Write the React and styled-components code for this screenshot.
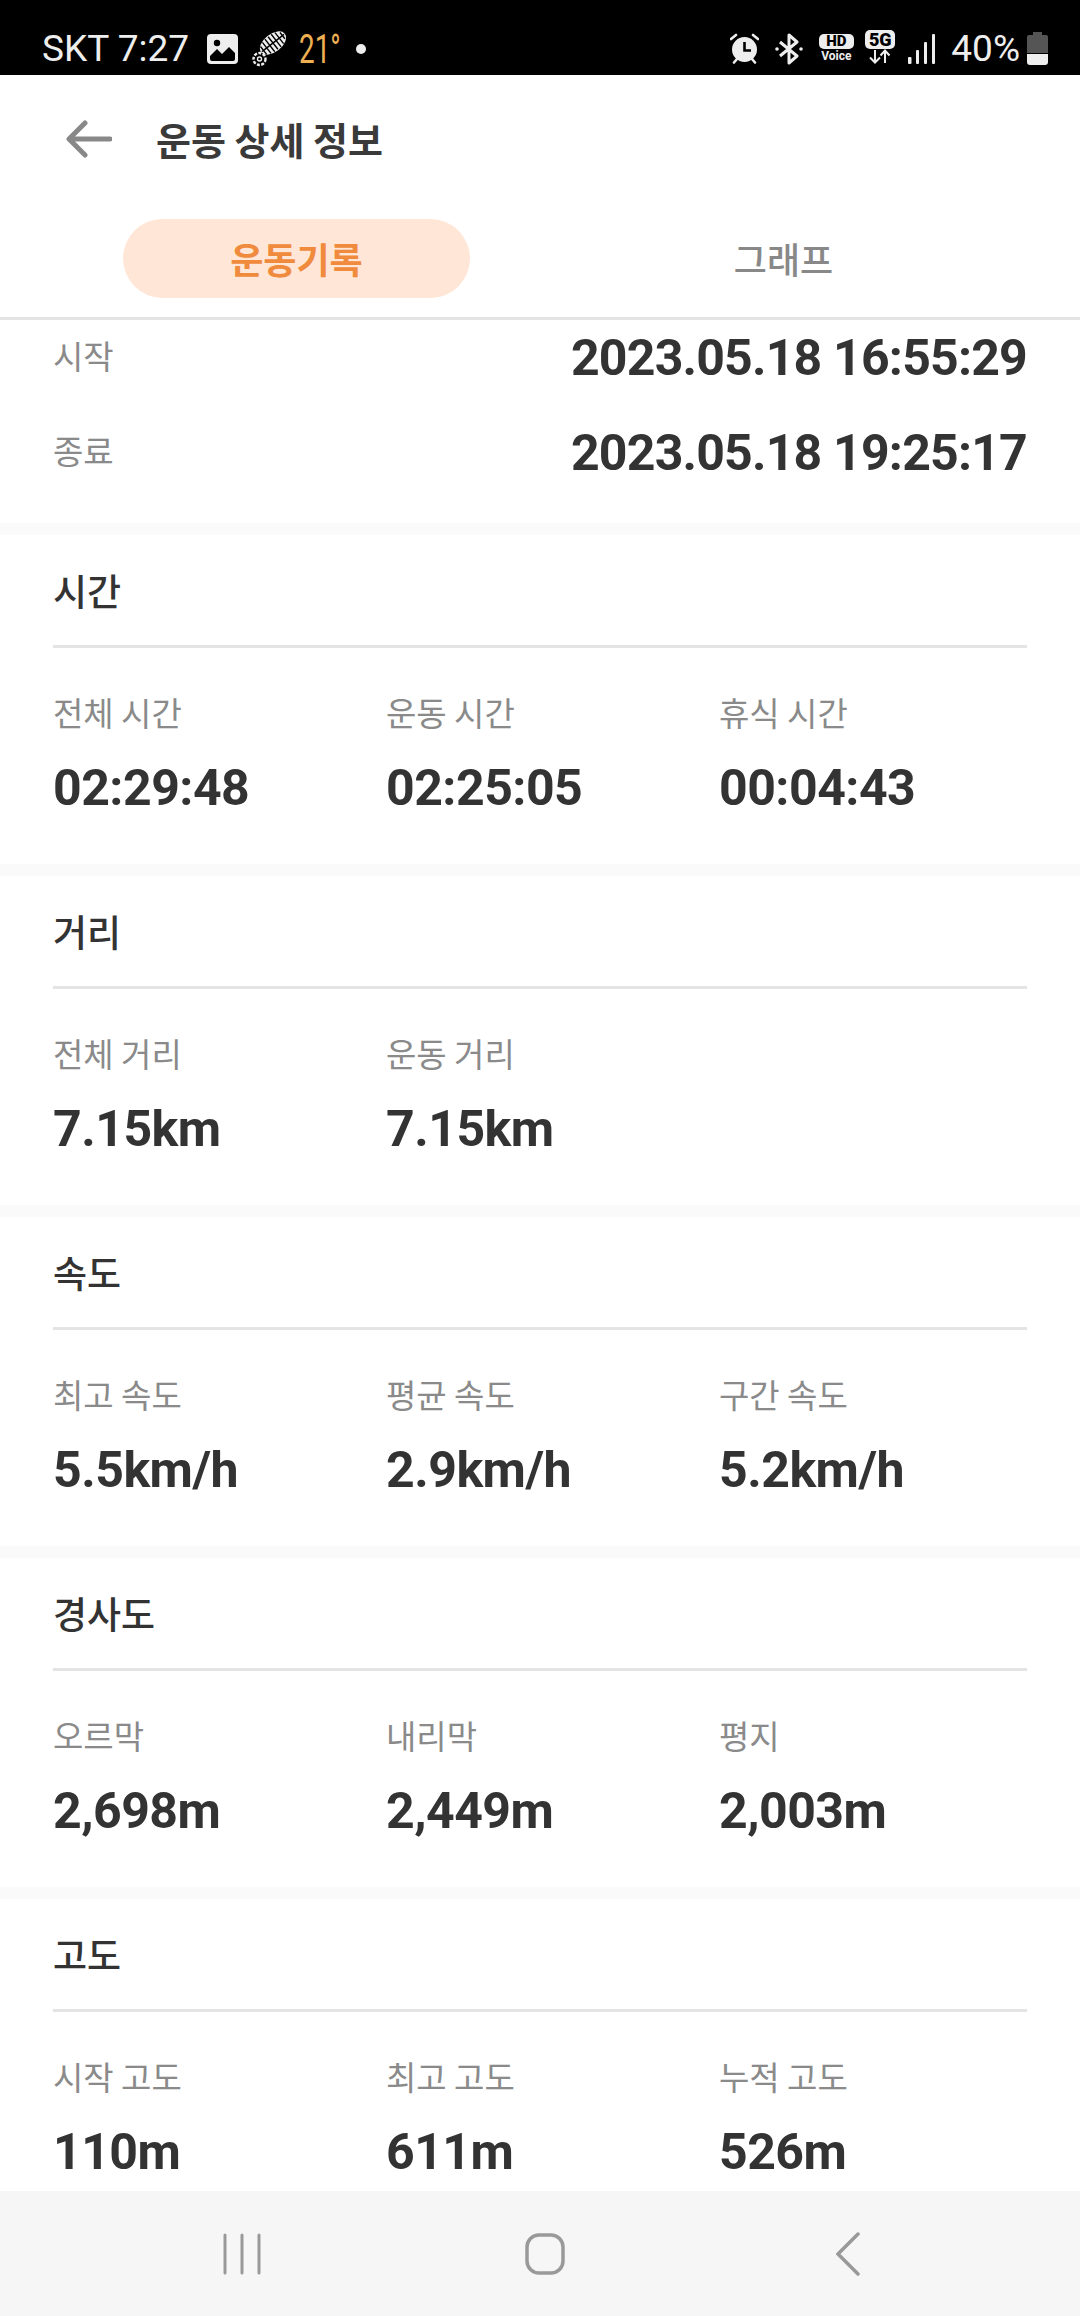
import React from 'react'
import styled, { createGlobalStyle } from 'styled-components'

const GlobalStyle = createGlobalStyle`
  html, body {
    margin: 0;
    padding: 0;
    background: #fafafa;
  }
  * {
    box-sizing: border-box;
  }
`

const Page = styled.div`
  display: flex;
  flex-direction: column;
  width: 1080px;
  height: 2316px;
  overflow: hidden;
  background: #fafafa;
  font-family: "Noto Sans CJK KR", "Noto Sans", sans-serif;
`

const StatusBar = styled.div`
  display: flex;
  justify-content: space-between;
  align-items: center;
  flex: none;
  height: 75px;
  padding: 22px 32px 0 42px;
  background: #000;
  color: #eee;
  font-family: Roboto, sans-serif;
`

const StatusGroup = styled.div`
  display: flex;
  align-items: center;
`

const StatusText = styled.span`
  font-size: 37px;
  line-height: 44px;
  letter-spacing: ${props => props.$spacing || 0}px;
  margin-right: ${props => props.$after || 0}px;
`

const Temp = styled.span`
  display: inline-block;
  width: 32px;
  margin: 0 25px 0 12px;
  font-size: 41px;
  line-height: 44px;
  color: #eeb053;
  white-space: nowrap;
  transform: scaleX(0.68);
  transform-origin: left center;
`

const Dot = styled.span`
  width: 10px;
  height: 10px;
  border-radius: 50%;
  background: #eee;
`

const Glyph = styled.svg`
  display: block;
  flex: none;
  margin-right: ${props => props.$after || 0}px;
`

const HdVoice = styled.div`
  display: flex;
  flex-direction: column;
  align-items: center;
  width: 36px;
  margin-right: 11px;
`

const HdBadge = styled.span`
  width: 35px;
  height: 15px;
  border-radius: 5px;
  background: #eee;
  color: #000;
  font-size: 15px;
  font-weight: 900;
  line-height: 15px;
  text-align: center;
`

const VoiceText = styled.span`
  font-size: 12px;
  font-weight: 700;
  line-height: 15px;
`

const FiveG = styled.div`
  display: flex;
  flex-direction: column;
  align-items: center;
  width: 30px;
  margin: -4px 13px 0 0;
`

const FiveGBadge = styled.span`
  width: 30px;
  height: 19px;
  border-radius: 5px;
  background: #eee;
  color: #000;
  font-size: 18px;
  font-weight: 900;
  line-height: 19px;
  text-align: center;
`

const Header = styled.header`
  display: flex;
  align-items: center;
  flex: none;
  height: 128px;
  padding-left: 66px;
  background: #fff;
`

const Title = styled.h1`
  margin: 0 0 0 44px;
  font-size: 38px;
  font-weight: 700;
  line-height: 50px;
  color: #3a3a3a;
`

const Tabs = styled.div`
  display: flex;
  justify-content: space-between;
  flex: none;
  height: 117px;
  padding: 16px 123px 19px;
  background: #fff;
  border-bottom: 3px solid #e4e4e4;
`

const Tab = styled.div`
  width: 347px;
  height: 79px;
  border-radius: 40px;
  background: ${props => (props.$active ? '#ffe6d6' : 'transparent')};
  color: ${props => (props.$active ? '#f08a3c' : '#888')};
  font-size: 36px;
  font-weight: ${props => (props.$active ? 700 : 500)};
  line-height: 79px;
  text-align: center;
`

const Content = styled.main`
  flex: 1;
  min-height: 0;
  overflow: hidden;
  display: flex;
  flex-direction: column;
  gap: 12px;
`

const Card = styled.section`
  flex: none;
  background: #fff;
`

const RangeCard = styled(Card)`
  display: flex;
  flex-direction: column;
  gap: 20px;
  height: 203px;
  padding: 0 53px 33px;
`

const RangeRow = styled.div`
  display: flex;
  justify-content: space-between;
  align-items: center;
  height: 75px;
`

const Label = styled.div`
  font-size: 33px;
  line-height: 48px;
  color: #8a8a8a;
`

const RangeLabel = styled(Label)`
  margin-top: -6px;
`

const Value = styled.div`
  font-family: Roboto, sans-serif;
  font-size: 50px;
  font-weight: 700;
  line-height: 60px;
  letter-spacing: ${props => props.$spacing ?? -0.5}px;
  color: #333;
`

const SectionCard = styled(Card)`
  height: 329px;
  padding: 0 53px;
`

const SectionTitle = styled.h2`
  height: 113px;
  margin: 0;
  border-bottom: 3px solid #e4e4e4;
  font-size: 37px;
  font-weight: 500;
  line-height: 110px;
  color: #333;
`

const Stats = styled.div`
  display: grid;
  grid-template-columns: repeat(3, 333px);
  padding-top: 40px;
`

const Stat = styled.div`
  display: flex;
  flex-direction: column;
  gap: 22px;
`

const NavBar = styled.nav`
  display: grid;
  grid-template-columns: repeat(3, 303px);
  justify-content: center;
  align-items: center;
  justify-items: center;
  flex: none;
  height: 125px;
  padding-left: 10px;
  background: #f6f6f6;
`

const sections = [
  {
    title: '시간',
    stats: [
      ['전체 시간', '02:29:48'],
      ['운동 시간', '02:25:05'],
      ['휴식 시간', '00:04:43'],
    ],
  },
  {
    title: '거리',
    stats: [
      ['전체 거리', '7.15km'],
      ['운동 거리', '7.15km'],
    ],
  },
  {
    title: '속도',
    stats: [
      ['최고 속도', '5.5km/h'],
      ['평균 속도', '2.9km/h'],
      ['구간 속도', '5.2km/h'],
    ],
  },
  {
    title: '경사도',
    stats: [
      ['오르막', '2,698m'],
      ['내리막', '2,449m'],
      ['평지', '2,003m'],
    ],
  },
  {
    title: '고도',
    stats: [
      ['시작 고도', '110m'],
      ['최고 고도', '611m'],
      ['누적 고도', '526m'],
    ],
  },
]

function PictureIcon() {
  return (
    <Glyph width="31" height="30" viewBox="0 0 31 30" $after={11}>
      <rect width="31" height="30" rx="4" fill="#eee" />
      <circle cx="10" cy="9" r="3.2" fill="#000" />
      <path d="M3 22 L10 15 L15 20 L22 13 L28 19 V25 Q28 27 26 27 H5 Q3 27 3 25 Z" fill="#000" />
      <path d="M6 24 H25 V20.5 L22 17 L15 24 L10 19 Z" fill="#eee" opacity="0" />
    </Glyph>
  )
}

function ShoeIcon() {
  return (
    <Glyph width="38" height="37" viewBox="0 0 38 37">
      <g transform="rotate(-38 24 13)">
        <ellipse cx="24" cy="13" rx="15" ry="9" fill="#eee" />
        <path
          d="M12 8 V18 M16 6 V20 M20 5 V21 M24 5 V21 M28 5 V21 M32 6 V20 M36 9 V17 M10 13 H38"
          stroke="#000"
          strokeWidth="1.4"
        />
      </g>
      <circle cx="10.5" cy="29" r="6" fill="none" stroke="#eee" strokeWidth="2.4" strokeDasharray="3 1.4" />
      <circle cx="10.5" cy="29" r="2" fill="none" stroke="#eee" strokeWidth="1.4" />
    </Glyph>
  )
}

function AlarmIcon() {
  return (
    <Glyph width="29" height="31" viewBox="0 0 29 31" $after={16}>
      <circle cx="14.5" cy="16.5" r="12.5" fill="#eee" />
      <path d="M14.5 9 V17.5 H21" fill="none" stroke="#000" strokeWidth="2.6" />
      <path d="M1 6 L6 2 M28 6 L23 2 M4 29.5 L7 26 M25 29.5 L22 26" stroke="#eee" strokeWidth="2.6" strokeLinecap="round" />
    </Glyph>
  )
}

function BluetoothIcon() {
  return (
    <Glyph width="28" height="32" viewBox="0 0 28 32" $after={15}>
      <path
        d="M5 9 L22 23 L14 30 V2 L22 9 L5 23"
        fill="none"
        stroke="#eee"
        strokeWidth="3"
        strokeLinejoin="round"
      />
      <circle cx="2" cy="16" r="1.8" fill="#eee" />
      <circle cx="26" cy="16" r="1.8" fill="#eee" />
    </Glyph>
  )
}

function TransferArrows() {
  return (
    <Glyph width="24" height="15" viewBox="0 0 24 15">
      <path
        d="M7 1 V13 M2 8.5 L7 13.5 L12 8.5 M17 14 V2 M12.5 6.5 L17 1.5 L21.5 6.5"
        fill="none"
        stroke="#eee"
        strokeWidth="2"
      />
    </Glyph>
  )
}

function SignalIcon() {
  return (
    <Glyph width="28" height="30" viewBox="0 0 28 30" $after={15}>
      <rect x="0" y="23" width="3.5" height="7" rx="1" fill="#eee" />
      <rect x="8" y="16" width="3" height="14" rx="1" fill="#eee" />
      <rect x="16" y="8" width="3" height="22" rx="1" fill="#eee" />
      <rect x="24" y="0" width="3" height="30" rx="1" fill="#eee" />
    </Glyph>
  )
}

function BatteryIcon() {
  return (
    <Glyph width="21" height="33" viewBox="0 0 21 33">
      <path d="M6 0 H15 V3 H19 Q21 3 21 5 V21 H0 V5 Q0 3 2 3 H6 Z" fill="#555" />
      <path d="M0 22 H21 V30 Q21 33 18 33 H3 Q0 33 0 30 Z" fill="#eee" />
    </Glyph>
  )
}

function BackArrow() {
  return (
    <Glyph width="46" height="38" viewBox="0 0 46 38">
      <path
        d="M44 19 H4 M19 3 L3 19 L19 35"
        fill="none"
        stroke="#888"
        strokeWidth="5"
        strokeLinecap="round"
        strokeLinejoin="round"
      />
    </Glyph>
  )
}

function RecentsIcon() {
  return (
    <Glyph width="38" height="42" viewBox="0 0 38 42">
      <path d="M2 2 V40 M19 2 V40 M36 2 V40" stroke="#999" strokeWidth="3" strokeLinecap="round" />
    </Glyph>
  )
}

function HomeIcon() {
  return (
    <Glyph width="40" height="42" viewBox="0 0 40 42">
      <rect x="2" y="2" width="36" height="38" rx="12" fill="none" stroke="#999" strokeWidth="3.5" />
    </Glyph>
  )
}

function NavBackIcon() {
  return (
    <Glyph width="24" height="44" viewBox="0 0 24 44">
      <path d="M22 2 L2 22 L22 42" fill="none" stroke="#999" strokeWidth="3.5" strokeLinecap="round" />
    </Glyph>
  )
}

function Section({ title, stats }) {
  return (
    <SectionCard>
      <SectionTitle>{title}</SectionTitle>
      <Stats>
        {stats.map(([label, value]) => (
          <Stat key={label}>
            <Label>{label}</Label>
            <Value>{value}</Value>
          </Stat>
        ))}
      </Stats>
    </SectionCard>
  )
}

export default function App() {
  return (
    <Page>
      <GlobalStyle />
      <StatusBar>
        <StatusGroup>
          <StatusText $after={18}>SKT 7:27</StatusText>
          <PictureIcon />
          <ShoeIcon />
          <Temp>21°</Temp>
          <Dot />
        </StatusGroup>
        <StatusGroup>
          <AlarmIcon />
          <BluetoothIcon />
          <HdVoice>
            <HdBadge>HD</HdBadge>
            <VoiceText>Voice</VoiceText>
          </HdVoice>
          <FiveG>
            <FiveGBadge>5G</FiveGBadge>
            <TransferArrows />
          </FiveG>
          <SignalIcon />
          <StatusText $after={7}>40%</StatusText>
          <BatteryIcon />
        </StatusGroup>
      </StatusBar>
      <Header>
        <BackArrow />
        <Title>운동 상세 정보</Title>
      </Header>
      <Tabs>
        <Tab $active>운동기록</Tab>
        <Tab>그래프</Tab>
      </Tabs>
      <Content>
        <RangeCard>
          <RangeRow>
            <RangeLabel>시작</RangeLabel>
            <Value $spacing={-0.8}>2023.05.18 16:55:29</Value>
          </RangeRow>
          <RangeRow>
            <RangeLabel>종료</RangeLabel>
            <Value $spacing={-0.8}>2023.05.18 19:25:17</Value>
          </RangeRow>
        </RangeCard>
        {sections.map(section => (
          <Section key={section.title} {...section} />
        ))}
      </Content>
      <NavBar>
        <RecentsIcon />
        <HomeIcon />
        <NavBackIcon />
      </NavBar>
    </Page>
  )
}
